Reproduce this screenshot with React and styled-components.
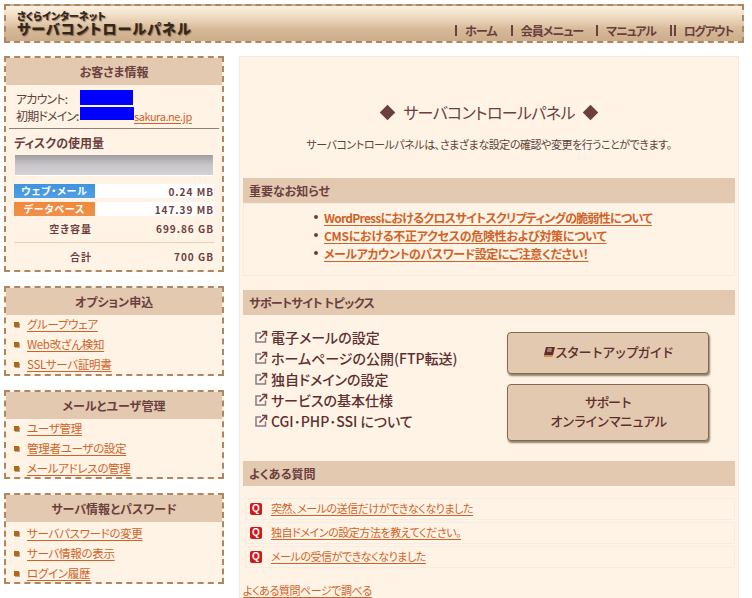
import React from 'react';
import styled, { createGlobalStyle } from 'styled-components';

const Global = createGlobalStyle`
    html, body {
        margin: 0;
        padding: 0;
        background: #ffffff;
    }
    body {
        font-family: "Noto Sans CJK JP", "Liberation Sans", sans-serif;
        font-size: 12px;
        color: #6b3f3f;
        font-feature-settings: "palt";
    }
    ul {
        margin: 0;
        padding: 0;
        list-style: none;
    }
`;

const Page = styled.div`
    width: 740px;
    height: 598px;
    padding: 4px 0 0 4px;
    overflow: hidden;
`;

const Header = styled.header`
    box-sizing: border-box;
    width: 740px;
    height: 39px;
    border: 2px dashed #ad8763;
    display: flex;
    justify-content: space-between;
    align-items: flex-end;
    padding: 0 9px 0 11px;
    background: linear-gradient(#fbf0e2 0, #f4e3cd 20%, #e6cfb2 45%, #d6bb9a 65%, #cbad8a 100%);
`;

const Logo = styled.div`
    display: flex;
    flex-direction: column;
    align-self: flex-start;
    padding-top: 5px;
    color: #33261d;
    font-weight: 900;
    text-shadow: 1px 1px 1px rgba(70, 40, 20, 0.55);
`;

const LogoSmall = styled.span`
    font-size: 10px;
    line-height: 10px;
`;

const LogoBig = styled.span`
    font-size: 14px;
    line-height: 14px;
    letter-spacing: 1.1px;
`;

const TopNav = styled.nav`
    display: flex;
    align-items: center;
    height: 20px;
    margin-bottom: 1px;
    font-size: 12px;
    font-weight: 700;
    color: #6b3f3f;
`;

const TopLink = styled.span`
    display: block;
    line-height: 11px;
    margin-left: ${(p) => p.$gap}px;
    padding-left: 8px;
    letter-spacing: ${(p) => p.$spacing}px;
    border-left: ${(p) => (p.$double ? '6px double' : '2px solid')} #6b3f3f;
`;

const Columns = styled.div`
    display: flex;
    align-items: flex-start;
    gap: 15px;
    margin-top: 13px;
`;

const Sidebar = styled.aside`
    width: 220px;
    display: flex;
    flex-direction: column;
    gap: 14px;
`;

const Box = styled.section`
    box-sizing: border-box;
    height: ${(p) => p.$height}px;
    border: 2px dashed #ad8763;
    background: #fff3e6;
`;

const BoxTitle = styled.h2`
    margin: 0;
    height: 27px;
    line-height: 27px;
    background: #e3c9af;
    text-align: center;
    font-size: 12px;
    font-weight: 700;
    color: #6b3f3f;
`;

const AccountTable = styled.div`
    display: grid;
    grid-template-columns: 64px auto;
    grid-auto-rows: 17px;
    align-items: center;
    margin: 0 3px;
    padding: 5px 0 4px 7px;
    color: #5d4437;
    border-bottom: 1px solid #8c8078;
    white-space: nowrap;
    letter-spacing: -0.85px;
`;

const Redacted = styled.span`
    display: inline-block;
    vertical-align: top;
    height: ${(p) => p.$h}px;
    width: ${(p) => p.$w}px;
    background: #0000ff;
`;

const Link = styled.a`
    color: #cf6327;
    text-decoration: underline;
    text-underline-offset: 2px;
    cursor: pointer;
`;

const ThinLink = styled(Link)`
    font-size: 11px;
    letter-spacing: -0.45px;
`;

const SideLink = styled(Link)`
    font-size: 11.5px;
    letter-spacing: -0.3px;
`;

const NoticeLink = styled(Link)`
    letter-spacing: ${(p) => p.$spacing}px;
`;

const DiskTitle = styled.h3`
    margin: 0;
    padding: 7px 0 0 8px;
    font-size: 12px;
    line-height: 14px;
    font-weight: 700;
    color: #6b3f3f;
`;

const DiskBar = styled.div`
    height: 20px;
    margin: 5px 9px 8px 9px;
    border-bottom: 1px solid #fff;
    background: linear-gradient(#a09ea0, #c8c6c8 50%, #d4d2d4);
`;

const UsageRow = styled.div`
    display: flex;
    justify-content: space-between;
    align-items: center;
    height: 14px;
    margin: 0 8px 4px 8px;
    background: #ffffff;
    font-size: 10px;
    font-weight: 700;
    color: #6b3f3f;
`;

const UsageLabel = styled.span`
    box-sizing: border-box;
    width: 81px;
    height: 14px;
    line-height: 14px;
    text-align: center;
    font-size: 10px;
    letter-spacing: 0.8px;
    color: #fff;
    background: ${(p) => p.$bg};
`;

const Amount = styled.span`
    letter-spacing: 1px;
`;

const TotalRow = styled.div`
    display: flex;
    justify-content: space-between;
    align-items: center;
    margin: 0 8px ${(p) => p.$after}px;
    height: ${(p) => p.$height}px;
    border-top: ${(p) => (p.$line ? '1px solid #e8cfb2' : 'none')};
    font-size: 10px;
    font-weight: 700;
    color: #6b3f3f;
`;

const TotalLabel = styled.span`
    width: 78px;
    text-align: right;
    letter-spacing: 1px;
`;

const MenuList = styled.ul`
    margin-top: ${(p) => p.$offset}px;
`;

const MenuItem = styled.li`
    display: flex;
    align-items: center;
    height: 20px;
    padding-left: 8px;
    gap: 8px;
`;

const Bullet = styled.span`
    width: 5px;
    height: 5px;
    background: #b5660f;
    box-shadow: 1px 1px 0 #a8a8a8;
`;

const Main = styled.main`
    box-sizing: border-box;
    width: 500px;
    height: 560px;
    padding: 0 3px;
    background: #fff3e6;
    border: 1px solid #f0ebe6;
    border-bottom: 0;
`;

const PageTitle = styled.h1`
    margin: 43px 0 0;
    height: 24px;
    display: flex;
    justify-content: center;
    align-items: center;
    gap: 8px;
    font-size: 16px;
    font-weight: 400;
    letter-spacing: -0.65px;
    color: #6b3f3f;
`;

const Diamond = styled.span`
    width: 11px;
    height: 11px;
    margin: 0 2px;
    background: #6b3f3f;
    transform: rotate(45deg);
`;

const Lead = styled.p`
    margin: 11px 0 0;
    line-height: 18px;
    text-align: center;
    font-size: 11px;
    letter-spacing: -0.45px;
    color: #5d4437;
`;

const SectionTitle = styled.h2`
    margin: ${(p) => p.$top}px 0 0;
    height: 25px;
    line-height: 25px;
    padding-left: 6px;
    background: #e3c9af;
    font-size: 12px;
    font-weight: 700;
    letter-spacing: ${(p) => p.$spacing || 0}px;
    color: #6b3f3f;
`;

const NoticeBox = styled.ul`
    box-sizing: border-box;
    height: 73px;
    padding: 4px 0 0 70px;
    border: 1px solid #f3ece5;
`;

const NoticeItem = styled.li`
    display: flex;
    align-items: center;
    height: 18px;
    gap: 6px;
    font-weight: 700;
`;

const Dot = styled.span`
    width: 4px;
    height: 4px;
    border-radius: 50%;
    background: #6b3f3f;
`;

const Topics = styled.div`
    display: flex;
    height: 146px;
`;

const TopicList = styled.ul`
    width: 252px;
    padding: 11px 0 0 12px;
`;

const TopicItem = styled.li`
    display: flex;
    align-items: center;
    gap: 3px;
    height: 21px;
    font-size: 14px;
    font-weight: 500;
    color: #5e2f2f;
`;

const Buttons = styled.div`
    width: 202px;
    display: flex;
    flex-direction: column;
    gap: 10px;
    padding-top: 17px;
`;

const BigButton = styled.button`
    box-sizing: border-box;
    height: ${(p) => p.$height}px;
    display: flex;
    align-items: center;
    justify-content: center;
    text-align: center;
    font-family: inherit;
    font-size: 13px;
    font-weight: 500;
    line-height: 19px;
    letter-spacing: ${(p) => p.$spacing}px;
    color: #5e2f2f;
    background: #e3c9af;
    border: 1px solid #7f6b4c;
    border-radius: 4px;
    box-shadow: 1px 2px 2px #8f8169;
    padding: 0 0 3px;
`;

const FaqList = styled.ul`
    display: flex;
    flex-direction: column;
    gap: 2px;
    margin-top: 12px;
`;

const FaqRow = styled.li`
    box-sizing: border-box;
    height: 22px;
    margin-left: 2px;
    display: flex;
    align-items: center;
    gap: 9px;
    padding: 0 0 2px 4px;
    border: 1px solid #f5ede5;
`;

const QBadge = styled.span`
    width: 12px;
    height: 12px;
    margin-top: 2px;
    line-height: 12px;
    border-radius: 2px;
    background: #d01818;
    color: #fff;
    font-family: "Liberation Sans", sans-serif;
    font-size: 10px;
    font-weight: 700;
    text-align: center;
`;

const MoreLink = styled.div`
    margin-top: 13px;
`;

const ExternalIcon = () => (
    <svg width="13" height="13" viewBox="0 0 13 13" fill="none">
        <path d="M10.5 7.5v4.5H1V3h5" stroke="#8a7a8c" strokeWidth="1.5" />
        <path d="M4.5 8.5 11 2M7 1.5h4.5V6" stroke="#6b3f3f" strokeWidth="1.5" />
    </svg>
);

const BookIcon = () => (
    <svg width="12" height="12" viewBox="0 0 12 12" style={{ flexShrink: 0 }}>
        <path d="M3 1h9L10 9H1z" fill="#5e2f2f" />
        <path d="M1 9h9l-.5 2H1z" fill="#d08a50" />
        <path d="M4.5 3h4.5M4 5h4.5" stroke="#e3c9af" strokeWidth="1" />
    </svg>
);

const menus = [
    { title: 'オプション申込', height: 90, offset: -1, items: ['グループウェア', 'Web改ざん検知', 'SSLサーバ証明書'] },
    { title: 'メールとユーザ管理', height: 89, offset: -1, items: ['ユーザ管理', '管理者ユーザの設定', 'メールアドレスの管理'] },
    { title: 'サーバ情報とパスワード', height: 91, offset: 1, items: ['サーバパスワードの変更', 'サーバ情報の表示', 'ログイン履歴'] },
];

const notices = [
    { text: 'WordPressにおけるクロスサイトスクリプティングの脆弱性について', spacing: -0.75 },
    { text: 'CMSにおける不正アクセスの危険性および対策について', spacing: -0.3 },
    { text: 'メールアカウントのパスワード設定にご注意ください！', spacing: -0.45 },
];

const topics = ['電子メールの設定', 'ホームページの公開(FTP転送)', '独自ドメインの設定', 'サービスの基本仕様', 'CGI･PHP･SSI について'];

const faqs = ['突然、メールの送信だけができなくなりました', '独自ドメインの設定方法を教えてください。', 'メールの受信ができなくなりました'];

const App = () => (
    <Page>
        <Global />
        <Header>
            <Logo>
                <LogoSmall>さくらインターネット</LogoSmall>
                <LogoBig>サーバコントロールパネル</LogoBig>
            </Logo>
            <TopNav>
                <TopLink $gap={0} $spacing={-0.8}>ホーム</TopLink>
                <TopLink $gap={14} $spacing={-1}>会員メニュー</TopLink>
                <TopLink $gap={13} $spacing={-1.2}>マニュアル</TopLink>
                <TopLink $gap={14} $spacing={-1.4} $double>ログアウト</TopLink>
            </TopNav>
        </Header>
        <Columns>
            <Sidebar>
                <Box $height={216}>
                    <BoxTitle>お客さま情報</BoxTitle>
                    <AccountTable>
                        <span>アカウント:</span>
                        <span><Redacted $w={53} $h={15} /></span>
                        <span>初期ドメイン:</span>
                        <span><Redacted $w={54} $h={13} /><ThinLink>sakura.ne.jp</ThinLink></span>
                    </AccountTable>
                    <DiskTitle>ディスクの使用量</DiskTitle>
                    <DiskBar />
                    <UsageRow>
                        <UsageLabel $bg="linear-gradient(#3f93dc, #4f9fe6)">ウェブ・メール</UsageLabel>
                        <Amount>0.24 MB</Amount>
                    </UsageRow>
                    <UsageRow>
                        <UsageLabel $bg="linear-gradient(#f0883f, #f09048)">データベース</UsageLabel>
                        <Amount>147.39 MB</Amount>
                    </UsageRow>
                    <TotalRow $height={16} $after={6}>
                        <TotalLabel>空き容量</TotalLabel>
                        <Amount>699.86 GB</Amount>
                    </TotalRow>
                    <TotalRow $height={27} $after={0} $line>
                        <TotalLabel>合計</TotalLabel>
                        <Amount>700 GB</Amount>
                    </TotalRow>
                </Box>
                {menus.map((menu) => (
                    <Box key={menu.title} $height={menu.height}>
                        <BoxTitle>{menu.title}</BoxTitle>
                        <MenuList $offset={menu.offset}>
                            {menu.items.map((item) => (
                                <MenuItem key={item}>
                                    <Bullet />
                                    <SideLink>{item}</SideLink>
                                </MenuItem>
                            ))}
                        </MenuList>
                    </Box>
                ))}
            </Sidebar>
            <Main>
                <PageTitle>
                    <Diamond />
                    サーバコントロールパネル
                    <Diamond />
                </PageTitle>
                <Lead>サーバコントロールパネルは、さまざまな設定の確認や変更を行うことができます。</Lead>
                <SectionTitle $top={25}>重要なお知らせ</SectionTitle>
                <NoticeBox>
                    {notices.map((notice) => (
                        <NoticeItem key={notice.text}>
                            <Dot />
                            <NoticeLink $spacing={notice.spacing}>{notice.text}</NoticeLink>
                        </NoticeItem>
                    ))}
                </NoticeBox>
                <SectionTitle $top={14} $spacing={-0.6}>サポートサイト トピックス</SectionTitle>
                <Topics>
                    <TopicList>
                        {topics.map((topic) => (
                            <TopicItem key={topic}>
                                <ExternalIcon />
                                {topic}
                            </TopicItem>
                        ))}
                    </TopicList>
                    <Buttons>
                        <BigButton $height={42} $spacing={-1.2}><BookIcon />スタートアップガイド</BigButton>
                        <BigButton $height={57} $spacing={-1.4}>サポート<br />オンラインマニュアル</BigButton>
                    </Buttons>
                </Topics>
                <SectionTitle $top={0}>よくある質問</SectionTitle>
                <FaqList>
                    {faqs.map((faq) => (
                        <FaqRow key={faq}>
                            <QBadge>Q</QBadge>
                            <ThinLink>{faq}</ThinLink>
                        </FaqRow>
                    ))}
                </FaqList>
                <MoreLink><ThinLink>よくある質問ページで調べる</ThinLink></MoreLink>
            </Main>
        </Columns>
    </Page>
);

export default App;
